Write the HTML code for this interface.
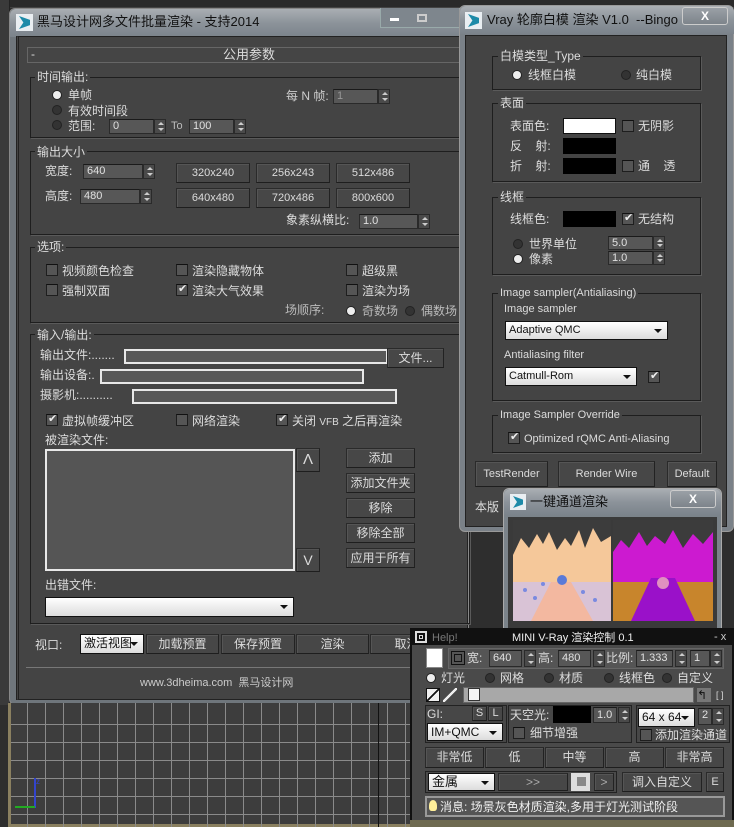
<!DOCTYPE html>
<html><head><meta charset="utf-8">
<style>
*{box-sizing:border-box;margin:0;padding:0}
body{width:734px;height:827px;overflow:hidden;position:relative;background:#2e2e2e;font-family:"Liberation Sans","Noto Sans CJK SC",sans-serif;font-size:12px;color:#dcdcdc}
div,span{position:absolute}
.t{white-space:nowrap;line-height:14px}
.grp{border:1px solid #1e1e1e;box-shadow:1px 1px 0 #5a5a5a}
.gl{background:#444;padding:0 2px}
.fld{background:#575757;border:1px solid #2a2a2a;border-top-color:#1a1a1a;color:#e0e0e0;font-size:11px;line-height:13px;padding-left:3px}
.sp{width:12px;background:#4a4a4a;border:1px solid #2a2a2a}
.sp:before{content:"";position:absolute;left:3px;top:2px;border:3px solid transparent;border-bottom:3px solid #ccc;border-top:0}
.sp:after{content:"";position:absolute;left:3px;bottom:2px;border:3px solid transparent;border-top:3px solid #ccc;border-bottom:0}
.btn{background:#474747;border:1px solid #2a2a2a;border-right-color:#222;border-bottom-color:#1e1e1e;box-shadow:inset 1px 1px 0 #555;text-align:center;color:#dcdcdc;line-height:18px}
.cb{width:12px;height:12px;background:#555;border:1px solid #1e1e1e;border-top-color:#111}
.cb.on:after{content:"✔";position:absolute;left:1px;top:-3px;font-size:11px;color:#eee}
.rd{width:8px;height:8px;border-radius:50%;background:#333;box-shadow:0 0 0 1px #222}
.rd.on{background:#eee}
.wf{border:2px solid #e8e8e8;background:#585858}
.dd{background:linear-gradient(#fff,#dcdcdc);border:1px solid #111;color:#111;font-size:11px;padding-left:3px;line-height:16px}
.dd:after{content:"";position:absolute;right:5px;top:7px;border:4px solid transparent;border-top:4px solid #111;border-bottom:0}
.glass{background:linear-gradient(#a9aeb3,#8c939a 50%,#7b838b)}
</style></head><body>

<!-- background viewport lines -->
<div style="left:0;top:0;width:734px;height:8px;background:#2a2a2a;border-bottom:1px solid #444"></div>
<div style="left:0;top:0;width:10px;height:705px;background:#3a3a3a;border-right:1px solid #222"></div>

<!-- MAIN WINDOW -->
<div style="left:9px;top:8px;width:460px;height:697px;border:1px solid #888;border-radius:6px;background:#6f767c"></div>
<div class="glass" style="left:10px;top:9px;width:458px;height:28px;border-radius:6px 6px 0 0"></div>
<div style="left:16px;top:14px;width:17px;height:17px;background:#e9eef2"><span style="left:3px;top:2px;width:11px;height:13px;background:#1d8aa8;clip-path:polygon(0 0,100% 30%,100% 70%,0 100%,40% 50%)"></span></div>
<div class="t" style="left:37px;top:15px;font-size:13px;color:#111">黑马设计网多文件批量渲染 - 支持2014</div>
<div style="left:380px;top:8px;width:80px;height:20px;border:1px solid #9aa;border-top:0;background:#7e868d"></div>
<div style="left:390px;top:18px;width:9px;height:3px;background:#fff"></div>
<div style="left:417px;top:14px;width:10px;height:8px;border:2px solid #ccc"></div>
<div style="left:16px;top:36px;width:452px;height:664px;background:#444;border:1px solid #222;border-left:3px double #222"></div>
<!-- rollout header -->
<div style="left:27px;top:47px;width:441px;height:16px;border:1px solid #666;background:#454545"></div>
<div class="t" style="left:31px;top:47px">-</div>
<div class="t" style="left:223px;top:48px;font-size:13px">公用参数</div>

<!-- 时间输出 -->
<div class="grp" style="left:30px;top:77px;width:440px;height:61px"></div>
<div class="t gl" style="left:35px;top:70px">时间输出:</div>
<div class="rd on" style="left:53px;top:91px"></div><div class="t" style="left:68px;top:88px">单帧</div>
<div class="rd" style="left:53px;top:106px"></div><div class="t" style="left:68px;top:104px">有效时间段</div>
<div class="rd" style="left:53px;top:121px"></div><div class="t" style="left:68px;top:119px">范围:</div>
<div class="fld" style="left:109px;top:119px;width:45px;height:15px">0</div><div class="sp" style="left:154px;top:119px;height:15px"></div>
<div class="t" style="left:171px;top:119px;color:#bbb;font-size:11px">To</div>
<div class="fld" style="left:189px;top:119px;width:45px;height:15px">100</div><div class="sp" style="left:234px;top:119px;height:15px"></div>
<div class="t" style="left:286px;top:89px;color:#ccc">每 N 帧:</div>
<div class="fld" style="left:333px;top:89px;width:45px;height:15px;color:#999">1</div><div class="sp" style="left:378px;top:89px;height:15px"></div>

<!-- 输出大小 -->
<div class="grp" style="left:30px;top:151px;width:440px;height:84px"></div>
<div class="t gl" style="left:35px;top:145px">输出大小</div>
<div class="t" style="left:45px;top:164px">宽度:</div>
<div class="fld" style="left:83px;top:164px;width:60px;height:15px">640</div><div class="sp" style="left:143px;top:164px;height:15px"></div>
<div class="t" style="left:45px;top:189px">高度:</div>
<div class="fld" style="left:80px;top:189px;width:60px;height:15px">480</div><div class="sp" style="left:140px;top:189px;height:15px"></div>
<div class="btn" style="left:176px;top:163px;width:74px;height:20px;font-size:11px">320x240</div>
<div class="btn" style="left:256px;top:163px;width:74px;height:20px;font-size:11px">256x243</div>
<div class="btn" style="left:336px;top:163px;width:74px;height:20px;font-size:11px">512x486</div>
<div class="btn" style="left:176px;top:188px;width:74px;height:20px;font-size:11px">640x480</div>
<div class="btn" style="left:256px;top:188px;width:74px;height:20px;font-size:11px">720x486</div>
<div class="btn" style="left:336px;top:188px;width:74px;height:20px;font-size:11px">800x600</div>
<div class="t" style="left:286px;top:213px">象素纵横比:</div>
<div class="fld" style="left:359px;top:214px;width:59px;height:15px">1.0</div><div class="sp" style="left:418px;top:214px;height:15px"></div>

<!-- 选项 -->
<div class="grp" style="left:30px;top:247px;width:440px;height:76px"></div>
<div class="t gl" style="left:35px;top:240px">选项:</div>
<div class="cb" style="left:46px;top:264px"></div><div class="t" style="left:62px;top:264px">视频颜色检查</div>
<div class="cb" style="left:46px;top:284px"></div><div class="t" style="left:62px;top:284px">强制双面</div>
<div class="cb" style="left:176px;top:264px"></div><div class="t" style="left:192px;top:264px">渲染隐藏物体</div>
<div class="cb on" style="left:176px;top:284px"></div><div class="t" style="left:192px;top:284px">渲染大气效果</div>
<div class="cb" style="left:346px;top:264px"></div><div class="t" style="left:362px;top:264px">超级黑</div>
<div class="cb" style="left:346px;top:284px"></div><div class="t" style="left:362px;top:284px">渲染为场</div>
<div class="t" style="left:285px;top:303px;color:#bbb">场顺序:</div>
<div class="rd on" style="left:347px;top:307px"></div><div class="t" style="left:362px;top:304px;color:#bbb">奇数场</div>
<div class="rd" style="left:406px;top:307px"></div><div class="t" style="left:421px;top:304px;color:#bbb">偶数场</div>

<!-- 输入/输出 -->
<div class="grp" style="left:30px;top:334px;width:440px;height:290px"></div>
<div class="t gl" style="left:35px;top:328px">输入/输出:</div>
<div class="t" style="left:40px;top:348px">输出文件:.......</div>
<div class="wf" style="left:124px;top:349px;width:264px;height:15px"></div>
<div class="btn" style="left:387px;top:348px;width:57px;height:20px">文件...</div>
<div class="t" style="left:40px;top:368px">输出设备:.</div>
<div class="wf" style="left:100px;top:369px;width:264px;height:15px"></div>
<div class="t" style="left:40px;top:388px">摄影机:..........</div>
<div class="wf" style="left:132px;top:389px;width:265px;height:15px"></div>
<div class="cb on" style="left:46px;top:414px"></div><div class="t" style="left:62px;top:414px">虚拟帧缓冲区</div>
<div class="cb" style="left:176px;top:414px"></div><div class="t" style="left:192px;top:414px">网络渲染</div>
<div class="cb on" style="left:276px;top:414px"></div><div class="t" style="left:292px;top:414px">关闭 <span style="position:static;font-size:10px">VFB</span> 之后再渲染</div>
<div class="t" style="left:45px;top:433px">被渲染文件:</div>
<div class="wf" style="left:45px;top:449px;width:250px;height:122px;background:#555"></div>
<div class="btn" style="left:296px;top:448px;width:24px;height:24px;font-size:15px;line-height:22px">Λ</div>
<div class="btn" style="left:296px;top:548px;width:24px;height:24px;font-size:14px;line-height:22px">V</div>
<div class="btn" style="left:346px;top:448px;width:69px;height:20px">添加</div>
<div class="btn" style="left:346px;top:473px;width:69px;height:20px">添加文件夹</div>
<div class="btn" style="left:346px;top:498px;width:69px;height:20px">移除</div>
<div class="btn" style="left:346px;top:523px;width:69px;height:20px">移除全部</div>
<div class="btn" style="left:346px;top:548px;width:69px;height:20px">应用于所有</div>
<div class="t" style="left:45px;top:578px">出错文件:</div>
<div class="dd" style="left:45px;top:597px;width:249px;height:20px"></div>

<!-- bottom row -->
<div class="t" style="left:35px;top:638px">视口:</div>
<div class="dd" style="left:80px;top:634px;width:64px;height:20px;font-size:12px;overflow:hidden">激活视图</div>
<div class="btn" style="left:146px;top:634px;width:73px;height:20px">加载预置</div>
<div class="btn" style="left:221px;top:634px;width:74px;height:20px">保存预置</div>
<div class="btn" style="left:296px;top:634px;width:73px;height:20px">渲染</div>
<div class="btn" style="left:370px;top:634px;width:73px;height:20px">取消</div>
<div style="left:26px;top:667px;width:442px;height:1px;background:#777"></div>
<div class="t" style="left:140px;top:676px;font-size:11px;color:#ccc">www.3dheima.com&nbsp; 黑马设计网</div>

<!-- viewport grid -->
<div style="left:8px;top:703px;width:402px;height:124px;background:#3d3d3d;border-left:3px solid #8a8060;border-bottom:3px solid #8a8060">
<svg width="402" height="124" style="position:absolute;left:0;top:0">
<g stroke="#8a8a8a" stroke-width="1">
<line x1="0" y1="21.5" x2="402" y2="21.5"/><line x1="0" y1="39.5" x2="402" y2="39.5"/><line x1="0" y1="57.5" x2="402" y2="57.5"/><line x1="0" y1="75.5" x2="402" y2="75.5"/><line x1="0" y1="93.5" x2="402" y2="93.5"/><line x1="0" y1="111.5" x2="402" y2="111.5"/>
</g>
<g stroke="#8a8a8a">
<path d="M16.5 0V124M34.5 0V124M52.5 0V124M70.5 0V124M88.5 0V124M106.5 0V124M124.5 0V124M142.5 0V124M160.5 0V124M178.5 0V124M196.5 0V124M214.5 0V124M232.5 0V124M250.5 0V124M268.5 0V124M286.5 0V124M304.5 0V124M322.5 0V124M340.5 0V124M358.5 0V124M376.5 0V124M394.5 0V124"/>
</g>
<line x1="367.5" y1="0" x2="367.5" y2="124" stroke="#111"/>
<line x1="24" y1="75" x2="24" y2="105" stroke="#3344cc" stroke-width="2"/>
<line x1="4" y1="104" x2="24" y2="104" stroke="#22aa22" stroke-width="2"/>
<text x="25" y="81" fill="#3344cc" font-size="8">z</text>
</svg></div>

<!-- VRAY WINDOW -->
<div style="left:459px;top:5px;width:275px;height:527px;border:1px solid #999;border-radius:6px;background:#7a8188"></div>
<div class="glass" style="left:460px;top:6px;width:274px;height:28px;border-radius:6px 6px 0 0"></div>
<div style="left:465px;top:12px;width:17px;height:17px;background:#e9eef2"><span style="left:3px;top:2px;width:11px;height:13px;background:#1d8aa8;clip-path:polygon(0 0,100% 30%,100% 70%,0 100%,40% 50%)"></span></div>
<div class="t" style="left:487px;top:13px;font-size:13px;color:#111">Vray 轮廓白模 渲染 V1.0&nbsp; --Bingo</div>
<div style="left:682px;top:7px;width:46px;height:18px;border:1px solid #ccc;border-radius:3px;background:linear-gradient(#9aa0a6,#7d848b);color:#fff;text-align:center;font-weight:bold;line-height:16px">X</div>
<div style="left:465px;top:35px;width:262px;height:492px;background:#444;border:1px solid #222"></div>

<div class="grp" style="left:492px;top:56px;width:209px;height:34px"></div>
<div class="t gl" style="left:498px;top:49px">白模类型_Type</div>
<div class="rd on" style="left:513px;top:71px"></div><div class="t" style="left:528px;top:68px">线框白模</div>
<div class="rd" style="left:622px;top:71px"></div><div class="t" style="left:636px;top:68px">纯白模</div>

<div class="grp" style="left:492px;top:103px;width:209px;height:79px"></div>
<div class="t gl" style="left:498px;top:96px">表面</div>
<div class="t" style="left:510px;top:119px">表面色:</div>
<div style="left:563px;top:118px;width:53px;height:16px;background:#fff;border:1px solid #111"></div>
<div class="cb" style="left:622px;top:120px"></div><div class="t" style="left:638px;top:119px">无阴影</div>
<div class="t" style="left:510px;top:139px">反&nbsp;&nbsp;&nbsp; 射:</div>
<div style="left:563px;top:138px;width:53px;height:16px;background:#000"></div>
<div class="t" style="left:510px;top:159px">折&nbsp;&nbsp;&nbsp; 射:</div>
<div style="left:563px;top:158px;width:53px;height:16px;background:#000"></div>
<div class="cb" style="left:622px;top:160px"></div><div class="t" style="left:638px;top:159px">通&nbsp;&nbsp;&nbsp; 透</div>

<div class="grp" style="left:492px;top:197px;width:209px;height:78px"></div>
<div class="t gl" style="left:498px;top:190px">线框</div>
<div class="t" style="left:510px;top:212px">线框色:</div>
<div style="left:563px;top:211px;width:53px;height:16px;background:#000"></div>
<div class="cb on" style="left:622px;top:213px"></div><div class="t" style="left:638px;top:212px">无结构</div>
<div class="rd" style="left:514px;top:240px"></div><div class="t" style="left:529px;top:237px">世界单位</div>
<div class="rd on" style="left:514px;top:255px"></div><div class="t" style="left:529px;top:252px">像素</div>
<div class="fld" style="left:608px;top:236px;width:45px;height:14px">5.0</div><div class="sp" style="left:653px;top:236px;height:14px"></div>
<div class="fld" style="left:608px;top:251px;width:45px;height:14px">1.0</div><div class="sp" style="left:653px;top:251px;height:14px"></div>

<div class="grp" style="left:492px;top:293px;width:209px;height:108px"></div>
<div class="t gl" style="left:498px;top:286px;font-size:11px">Image sampler(Antialiasing)</div>
<div class="t" style="left:504px;top:302px;font-size:11px">Image sampler</div>
<div class="dd" style="left:505px;top:321px;width:163px;height:19px;line-height:17px">Adaptive QMC</div>
<div class="t" style="left:504px;top:348px;font-size:11px">Antialiasing filter</div>
<div class="dd" style="left:505px;top:367px;width:132px;height:19px;line-height:17px">Catmull-Rom</div>
<div class="cb on" style="left:648px;top:371px"></div>

<div class="grp" style="left:492px;top:415px;width:209px;height:38px"></div>
<div class="t gl" style="left:498px;top:408px;font-size:11px">Image Sampler Override</div>
<div class="cb on" style="left:508px;top:432px"></div><div class="t" style="left:524px;top:432px;font-size:11px">Optimized rQMC Anti-Aliasing</div>

<div class="btn" style="left:475px;top:461px;width:73px;height:26px;line-height:24px;font-size:11px">TestRender</div>
<div class="btn" style="left:558px;top:461px;width:97px;height:26px;line-height:24px;font-size:11px">Render Wire</div>
<div class="btn" style="left:667px;top:461px;width:50px;height:26px;line-height:24px;font-size:11px">Default</div>
<div class="t" style="left:475px;top:500px">本版</div>

<!-- small window -->
<div style="left:503px;top:488px;width:219px;height:142px;border:1px solid #aaa;border-radius:6px 6px 0 0;background:#7b838a"></div>
<div class="glass" style="left:504px;top:489px;width:217px;height:26px;border-radius:6px 6px 0 0"></div>
<div style="left:510px;top:494px;width:16px;height:16px;background:#e9eef2"><span style="left:3px;top:2px;width:10px;height:12px;background:#1d8aa8;clip-path:polygon(0 0,100% 30%,100% 70%,0 100%,40% 50%)"></span></div>
<div class="t" style="left:530px;top:495px;font-size:13px;color:#111">一键通道渲染</div>
<div style="left:670px;top:490px;width:46px;height:18px;border:1px solid #ccc;border-radius:3px;background:linear-gradient(#9aa0a6,#7d848b);color:#fff;text-align:center;font-weight:bold;line-height:16px">X</div>
<div style="left:508px;top:517px;width:209px;height:113px;background:#3a3a3a"></div>
<svg width="200" height="101" style="position:absolute;left:513px;top:520px">
<rect x="0" y="0" width="98" height="101" fill="#3c3c3c"/>
<path d="M0 35 L8 18 16 28 24 14 30 24 36 12 44 30 52 18 58 26 66 10 72 28 80 8 88 22 98 16 V62 H0Z" fill="#f5c89a"/>
<rect x="0" y="62" width="98" height="39" fill="#d9c3d6"/>
<path d="M38 62 L58 62 80 101 18 101Z" fill="#f3b8a0"/>
<circle cx="49" cy="60" r="5" fill="#5a7ad8"/>
<g fill="#7a8ae0"><circle cx="12" cy="70" r="2"/><circle cx="22" cy="78" r="2"/><circle cx="70" cy="72" r="2"/><circle cx="82" cy="80" r="2"/><circle cx="30" cy="64" r="2"/></g>
<rect x="100" y="0" width="100" height="101" fill="#3c3c3c"/>
<path d="M100 32 L108 20 116 28 126 12 134 26 142 16 152 24 160 10 170 28 180 14 190 24 200 12 V62 H100Z" fill="#cc1ad0"/>
<rect x="100" y="62" width="100" height="39" fill="#c8852c"/>
<path d="M138 58 L162 58 182 101 118 101Z" fill="#9a11c9"/>
<circle cx="150" cy="63" r="6" fill="#e090c0"/>
</svg>

<!-- MINI V-RAY window -->
<div style="left:410px;top:628px;width:324px;height:199px;background:#4a4a4a;border:2px solid #111;border-bottom:0"></div>
<div style="left:412px;top:630px;width:322px;height:15px;background:#111"></div>
<div style="left:415px;top:631px;width:12px;height:12px;border:2px solid #ddd;background:#111"><span style="left:2px;top:2px;width:4px;height:4px;border:1px solid #ddd"></span></div>
<div class="t" style="left:432px;top:631px;color:#777;font-size:11px">Help!</div>
<div class="t" style="left:512px;top:631px;color:#eee;font-size:11px">MINI V-Ray 渲染控制 0.1</div>
<div class="t" style="left:714px;top:630px;color:#ccc;font-size:11px">- x</div>

<div style="left:426px;top:648px;width:17px;height:20px;background:#fff;border:1px solid #888"></div>
<div style="left:448px;top:648px;width:276px;height:21px;border:1px solid #666;background:#555"></div>
<div style="left:451px;top:651px;width:14px;height:14px;border:1px solid #111;background:#555"><span style="left:2px;top:2px;width:8px;height:8px;border:1px solid #111"></span></div>
<div class="t" style="left:467px;top:651px">宽:</div>
<div class="fld" style="left:489px;top:650px;width:33px;height:17px;line-height:15px">640</div><div class="sp" style="left:524px;top:650px;height:17px"></div>
<div class="t" style="left:538px;top:651px">高:</div>
<div class="fld" style="left:558px;top:650px;width:33px;height:17px;line-height:15px">480</div><div class="sp" style="left:593px;top:650px;height:17px"></div>
<div class="t" style="left:606px;top:651px">比例:</div>
<div class="fld" style="left:636px;top:650px;width:37px;height:17px;line-height:15px">1.333</div><div class="sp" style="left:675px;top:650px;height:17px"></div>
<div class="fld" style="left:690px;top:650px;width:20px;height:17px;line-height:15px">1</div><div class="sp" style="left:710px;top:650px;height:17px"></div>

<div class="rd on" style="left:427px;top:674px"></div><div class="t" style="left:441px;top:671px">灯光</div>
<div class="rd" style="left:486px;top:674px"></div><div class="t" style="left:500px;top:671px">网格</div>
<div class="rd" style="left:545px;top:674px"></div><div class="t" style="left:559px;top:671px">材质</div>
<div class="rd" style="left:605px;top:674px"></div><div class="t" style="left:619px;top:671px">线框色</div>
<div class="rd" style="left:663px;top:674px"></div><div class="t" style="left:677px;top:671px">自定义</div>

<div style="left:426px;top:688px;width:14px;height:14px;background:#eee;border:1px solid #111;background:linear-gradient(135deg,#eee 45%,#111 45%,#111 55%,#eee 55%)"></div>
<div style="left:443px;top:688px;width:14px;height:14px;background:linear-gradient(135deg,transparent 44%,#eee 44%,#eee 56%,transparent 56%)"></div>
<div style="left:463px;top:687px;width:231px;height:16px;background:#a8a8a8;border:1px solid #666"></div>
<div style="left:468px;top:688px;width:12px;height:13px;background:#f4f4f4;border:1px solid #333"></div>
<div class="t" style="left:697px;top:688px;color:#111;background:#777;width:14px;height:14px;font-size:12px">↰</div>
<div class="t" style="left:716px;top:688px;font-size:9px">[ ]</div>

<div style="left:425px;top:705px;width:82px;height:38px;border:1px solid #222;background:#474747"></div>
<div class="t" style="left:427px;top:707px">GI:</div>
<div class="btn" style="left:472px;top:706px;width:15px;height:15px;line-height:13px;font-size:11px">S</div>
<div class="btn" style="left:488px;top:706px;width:15px;height:15px;line-height:13px;font-size:11px">L</div>
<div class="dd" style="left:427px;top:723px;width:76px;height:18px;font-size:12px">IM+QMC</div>
<div style="left:508px;top:705px;width:124px;height:38px;border:1px solid #222;background:#474747"></div>
<div class="t" style="left:510px;top:708px">天空光:</div>
<div style="left:553px;top:706px;width:38px;height:17px;background:#000"></div>
<div class="fld" style="left:593px;top:707px;width:24px;height:16px;line-height:14px">1.0</div><div class="sp" style="left:618px;top:707px;height:16px"></div>
<div class="cb" style="left:513px;top:727px"></div><div class="t" style="left:530px;top:726px">细节增强</div>
<div style="left:636px;top:705px;width:94px;height:38px;border:1px solid #222;background:#474747"></div>
<div class="dd" style="left:638px;top:708px;width:57px;height:19px;font-size:12px">64 x 64</div>
<div class="fld" style="left:698px;top:708px;width:14px;height:17px">2</div><div class="sp" style="left:712px;top:708px;height:17px"></div>
<div class="cb" style="left:640px;top:729px"></div><div class="t" style="left:655px;top:728px">添加渲染通道</div>

<div class="btn" style="left:425px;top:747px;width:59px;height:21px;line-height:19px">非常低</div>
<div class="btn" style="left:485px;top:747px;width:59px;height:21px;line-height:19px">低</div>
<div class="btn" style="left:545px;top:747px;width:59px;height:21px;line-height:19px">中等</div>
<div class="btn" style="left:605px;top:747px;width:59px;height:21px;line-height:19px">高</div>
<div class="btn" style="left:665px;top:747px;width:59px;height:21px;line-height:19px">非常高</div>

<div style="left:425px;top:771px;width:192px;height:22px;border:1px solid #222"></div>
<div class="dd" style="left:428px;top:773px;width:67px;height:18px;font-size:13px">金属</div>
<div class="btn" style="left:498px;top:773px;width:70px;height:18px;line-height:16px;color:#aaa">&gt;&gt;</div>
<div style="left:571px;top:773px;width:19px;height:18px;background:#ddd"><span style="left:6px;top:4px;width:9px;height:9px;background:#888"></span></div>
<div class="btn" style="left:594px;top:773px;width:20px;height:18px;line-height:16px;color:#aaa">&gt;</div>
<div class="btn" style="left:622px;top:772px;width:80px;height:20px;line-height:18px">调入自定义</div>
<div class="btn" style="left:706px;top:772px;width:18px;height:20px;line-height:18px;font-size:11px">E</div>

<div style="left:425px;top:796px;width:300px;height:21px;border:2px solid #999;background:#555"></div>
<div style="left:429px;top:800px;width:8px;height:11px;border-radius:50% 50% 30% 30%;background:#ffef9a"></div>
<div class="t" style="left:440px;top:800px;color:#f0f0f0">消息: 场景灰色材质渲染,多用于灯光测试阶段</div>
<div style="left:410px;top:820px;width:324px;height:7px;background:#6e6a50"></div>

</body></html>
